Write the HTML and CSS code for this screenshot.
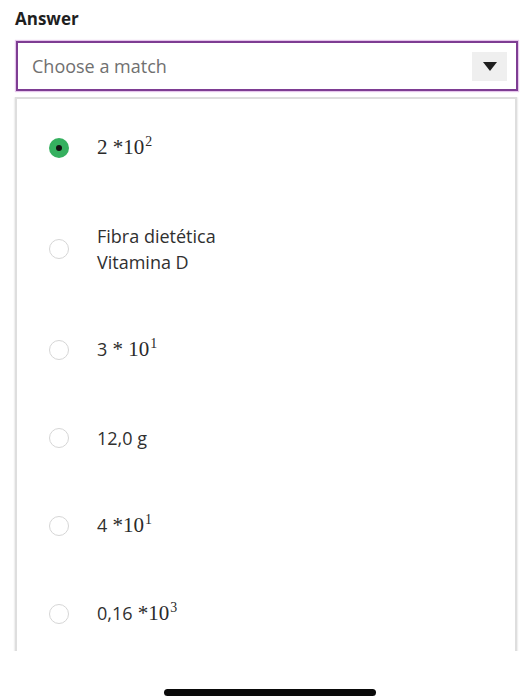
FILE: index.html
```html
<!DOCTYPE html>
<html lang="en">
<head>
<meta charset="utf-8">
<title>Answer</title>
<link rel="stylesheet" href="styles.css">
</head>
<body>
<div class="page">
  <div class="label">Answer</div>
  <div class="select">
    <span class="placeholder">Choose a match</span>
    <span class="arrow-box"><span class="arrow"></span></span>
  </div>
  <div class="panel-clip">
    <div class="panel">
      <ul class="options">
        <li class="option"><span class="radio checked"></span><span class="text math">2 *10<sup>2</sup></span></li>
        <li class="option"><span class="radio"></span><span class="text">Fibra dietética<br>Vitamina D</span></li>
        <li class="option"><span class="radio"></span><span class="text"><span class="sans">3</span><span class="math"> * 10<sup>1</sup></span></span></li>
        <li class="option"><span class="radio"></span><span class="text">12,0 g</span></li>
        <li class="option"><span class="radio"></span><span class="text"><span class="sans">4</span><span class="math"> *10<sup>1</sup></span></span></li>
        <li class="option"><span class="radio"></span><span class="text"><span class="sans">0,16</span><span class="math"> *10<sup>3</sup></span></span></li>
      </ul>
    </div>
  </div>
  <div class="home-bar"></div>
</div>
</body>
</html>
```

FILE: styles.css
```css
* { box-sizing: border-box; }
html, body { margin: 0; padding: 0; background: #fff; }
body {
  font-family: "Open Sans", "Liberation Sans", sans-serif;
  color: #333;
  width: 531px;
  height: 700px;
  overflow: hidden;
}
.page { display: flex; flex-direction: column; }
.label {
  font-weight: 700;
  font-size: 17px;
  line-height: 20px;
  color: #1f1f1f;
  padding: 9px 0 0 15px;
  height: 41px;
}
.select {
  margin: 0 13px 0 16px;
  height: 50px;
  border: 2px solid #7e3d93;
  box-shadow: 0 0 1px 1px #e6c6ec;
  display: flex;
  align-items: center;
  justify-content: space-between;
  padding: 0 9px 0 14px;
}
.placeholder {
  font-size: 18px;
  color: #707070;
  line-height: 24px;
}
.arrow-box {
  width: 35px;
  height: 29px;
  background: #efefef;
  display: flex;
  align-items: center;
  justify-content: center;
}
.arrow {
  width: 0;
  height: 0;
  border-left: 7px solid transparent;
  border-right: 7px solid transparent;
  border-top: 9px solid #1e1e1e;
}
.panel-clip {
  margin: 6px 12px 0 13px;
  height: 554px;
  overflow: hidden;
  padding: 0 2px;
}
.panel {
  border: 2px solid #dedede;
  border-bottom: none;
  box-shadow: 0 0 2px #cfcfcf;
  background: #fff;
  height: 600px;
}
.options {
  list-style: none;
  margin: 0;
  padding: 5px 0 0 0;
}
.option {
  display: flex;
  align-items: center;
  min-height: 88px;
  padding-left: 32px;
}
.option:nth-child(2) { min-height: 114px; }
.radio {
  width: 20px;
  height: 20px;
  border-radius: 50%;
  border: 1.5px solid #d6d6d6;
  background: #fff;
  flex: none;
  display: flex;
  align-items: center;
  justify-content: center;
}
.radio.checked {
  border: none;
  background: #35b05f;
}
.radio.checked::after {
  content: "";
  width: 6px;
  height: 6px;
  border-radius: 50%;
  background: #111;
}
.text {
  margin-left: 28px;
  font-size: 18px;
  line-height: 26px;
  color: #303030;
}
.math {
  font-family: "Liberation Serif", "Times New Roman", serif;
  font-size: 21px;
  color: #2a2a2a;
}
.sans {
  font-family: "Open Sans", "Liberation Sans", sans-serif;
  font-size: 18px;
}
sup {
  font-size: 0.66em;
  vertical-align: 0;
  position: relative;
  top: -0.55em;
  margin-left: 1px;
}
.home-bar {
  margin: 38px 0 0 164px;
  width: 212px;
  height: 7px;
  border-radius: 4px;
  background: #0a0a0a;
}
```
